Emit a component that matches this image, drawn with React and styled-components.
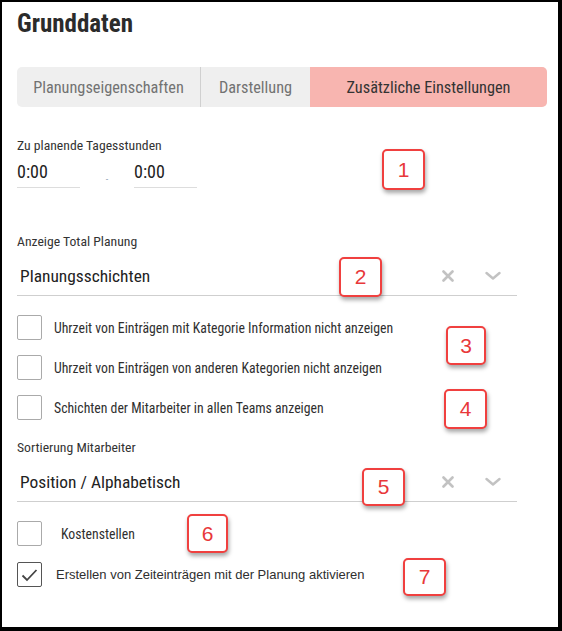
import React from "react";
import styled, { createGlobalStyle } from "styled-components";

const GlobalStyle = createGlobalStyle`
  html, body {
    margin: 0;
    padding: 0;
    background: #fff;
  }
  * {
    box-sizing: border-box;
  }
`;

const narrow = `"Liberation Sans Narrow", "Roboto Condensed", Roboto, sans-serif`;

const Frame = styled.div`
  position: relative;
  width: 562px;
  height: 631px;
  border-style: solid;
  border-color: #000;
  border-width: 2px 4px 4px 2px;
  padding: 0 14px 0 15px;
  font-family: ${narrow};
  color: #333;
`;

const Title = styled.h1`
  margin: 0;
  padding-top: 8px;
  font-size: 25px;
  line-height: 28px;
  font-weight: 700;
  color: #2b2b2b;
`;

const Tabs = styled.div`
  display: flex;
  margin-top: 29px;
  height: 40px;
  width: 530px;
  background: #efefef;
  border-radius: 5px;
  overflow: hidden;
`;

const Tab = styled.div`
  display: flex;
  align-items: center;
  justify-content: center;
  width: ${(p) => p.width}px;
  font-size: 16.3px;
  color: ${(p) => (p.active ? "#333" : "#727272")};
  background: ${(p) => (p.active ? "#f8b5b0" : "transparent")};
  border-right: ${(p) => (p.divider ? "1px solid #d0d0d0" : "none")};
`;

const Label = styled.div`
  font-size: 13.7px;
  line-height: 16px;
  color: #333;
  margin-top: ${(p) => p.top}px;
`;

const TimeRow = styled.div`
  display: flex;
  align-items: flex-start;
  margin-top: 6px;
`;

const TimeField = styled.div`
  width: 63px;
  height: 29px;
  border-bottom: 1px solid #ddd;
  font-size: 18px;
  line-height: 26px;
  color: #222;
`;

const Dash = styled.div`
  width: 54px;
  text-align: center;
  color: #9ab;
  font-size: 10px;
  line-height: 10px;
  padding-top: 16px;
`;

const Select = styled.div`
  display: flex;
  align-items: center;
  width: 500px;
  height: 40px;
  margin-top: ${(p) => p.top}px;
  padding-left: 3px;
  border-bottom: 1px solid #cfcfcf;
`;

const SelectValue = styled.div`
  flex: 1;
  font-size: 17.4px;
  color: #222;
`;

const SelectIcons = styled.div`
  display: flex;
  align-items: center;
  gap: 31px;
  padding-right: 16px;
  color: #c2c2c2;
`;

const CheckRow = styled.div`
  display: flex;
  align-items: center;
  height: 25px;
  margin-top: ${(p) => p.top}px;
`;

const Box = styled.div`
  flex: none;
  display: flex;
  align-items: center;
  justify-content: center;
  width: 25px;
  height: 25px;
  border: 1px solid ${(p) => (p.checked ? "#555" : "#aaa")};
  border-radius: 2px;
`;

const CheckText = styled.span`
  margin-left: ${(p) => p.gap}px;
  font-family: ${(p) => (p.plain ? `"Liberation Sans", Arial, sans-serif` : narrow)};
  font-size: ${(p) => (p.plain ? 13 : 13.75)}px;
  color: #2f2f2f;
`;

const Badge = styled.div`
  position: absolute;
  left: ${(p) => p.x}px;
  top: ${(p) => p.y}px;
  width: ${(p) => p.w}px;
  height: ${(p) => p.h}px;
  display: flex;
  align-items: center;
  justify-content: center;
  background: #fff;
  border: 2px solid #f0403f;
  border-radius: 5px;
  box-shadow: 1px 3px 4px rgba(0, 0, 0, 0.35);
  font-family: "Liberation Sans", Arial, sans-serif;
  font-size: 21px;
  color: #e8383a;
`;

const ClearIcon = () => (
  <svg width="12" height="12" viewBox="0 0 12 12">
    <path d="M1.5 1.5 L10.5 10.5 M10.5 1.5 L1.5 10.5" stroke="currentColor" strokeWidth="2.6" strokeLinecap="round" />
  </svg>
);

const ChevronIcon = () => (
  <svg width="16" height="10" viewBox="0 0 16 10">
    <path d="M1.5 2 L8 7.5 L14.5 2" stroke="currentColor" strokeWidth="2.4" fill="none" strokeLinecap="round" strokeLinejoin="round" />
  </svg>
);

const CheckMark = () => (
  <svg width="17" height="14" viewBox="0 0 17 14">
    <path d="M1.5 7.5 L6 12 L15.5 2" stroke="#444" strokeWidth="1.8" fill="none" />
  </svg>
);

const Checkbox = ({ top, checked, gap = 12, plain, children }) => (
  <CheckRow top={top}>
    <Box checked={checked}>{checked && <CheckMark />}</Box>
    <CheckText gap={gap} plain={plain}>{children}</CheckText>
  </CheckRow>
);

const SelectField = ({ top, value }) => (
  <Select top={top}>
    <SelectValue>{value}</SelectValue>
    <SelectIcons>
      <ClearIcon />
      <ChevronIcon />
    </SelectIcons>
  </Select>
);

const badges = [
  { n: 1, x: 380, y: 147, w: 43, h: 41 },
  { n: 2, x: 337, y: 255, w: 43, h: 40 },
  { n: 3, x: 444, y: 324, w: 40, h: 39 },
  { n: 4, x: 442, y: 387, w: 43, h: 40 },
  { n: 5, x: 360, y: 466, w: 43, h: 38 },
  { n: 6, x: 185, y: 512, w: 41, h: 39 },
  { n: 7, x: 401, y: 556, w: 43, h: 38 },
];

export default function App() {
  return (
    <>
      <GlobalStyle />
      <Frame>
        <Title>Grunddaten</Title>
        <Tabs>
          <Tab width={184} divider>Planungseigenschaften</Tab>
          <Tab width={109}>Darstellung</Tab>
          <Tab width={237} active>Zusätzliche Einstellungen</Tab>
        </Tabs>

        <Label top={30}>Zu planende Tagesstunden</Label>
        <TimeRow>
          <TimeField>0:00</TimeField>
          <Dash>-</Dash>
          <TimeField>0:00</TimeField>
        </TimeRow>

        <Label top={45}>Anzeige Total Planung</Label>
        <SelectField top={7} value="Planungsschichten" />

        <Checkbox top={19}>Uhrzeit von Einträgen mit Kategorie Information nicht anzeigen</Checkbox>
        <Checkbox top={15}>Uhrzeit von Einträgen von anderen Kategorien nicht anzeigen</Checkbox>
        <Checkbox top={15}>Schichten der Mitarbeiter in allen Teams anzeigen</Checkbox>

        <Label top={19}>Sortierung Mitarbeiter</Label>
        <SelectField top={7} value="Position / Alphabetisch" />

        <Checkbox top={19} gap={19}>Kostenstellen</Checkbox>
        <Checkbox top={16} checked gap={14} plain>Erstellen von Zeiteinträgen mit der Planung aktivieren</Checkbox>

        {badges.map((b) => (
          <Badge key={b.n} x={b.x} y={b.y} w={b.w} h={b.h}>{b.n}</Badge>
        ))}
      </Frame>
    </>
  );
}
